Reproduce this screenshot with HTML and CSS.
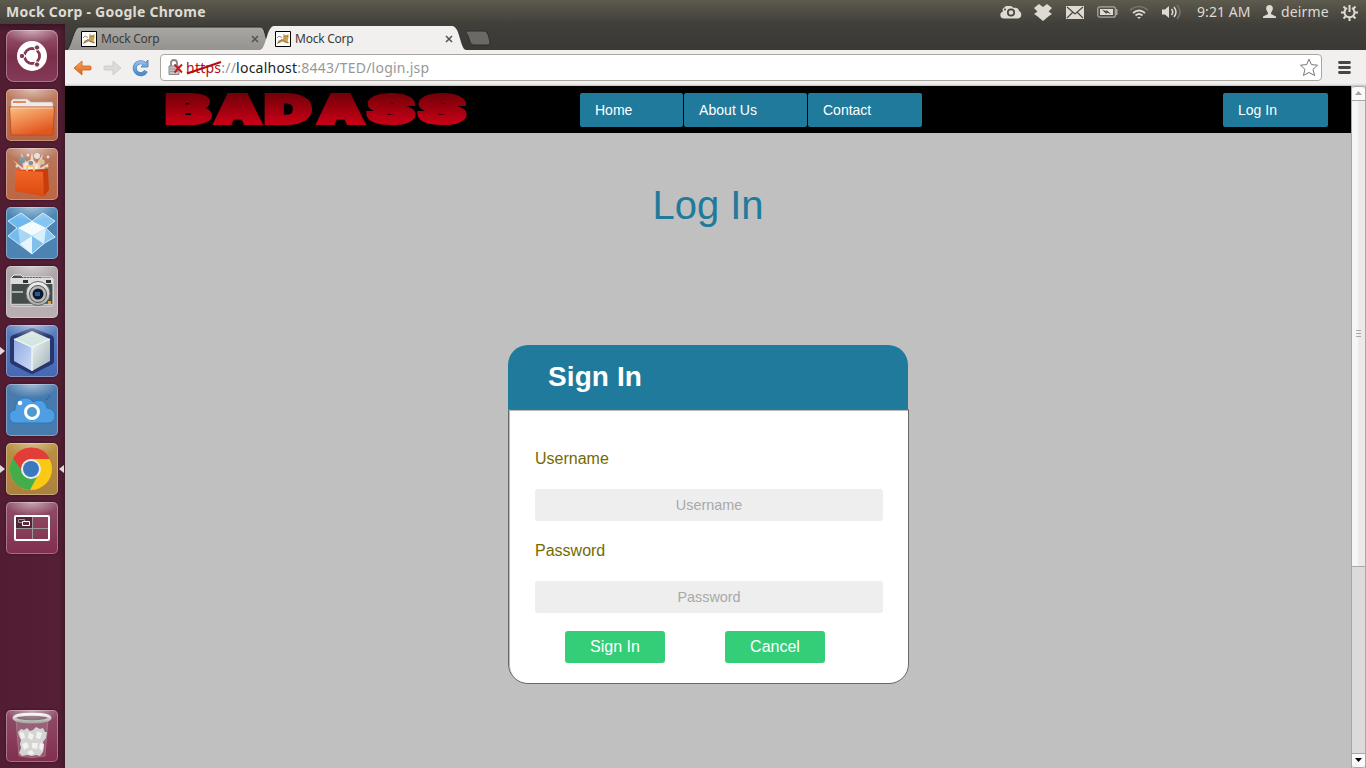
FILE: index.html
```html
<!DOCTYPE html>
<html lang="en">
<head>
<meta charset="utf-8">
<title>Mock Corp</title>
<link rel="stylesheet" href="styles.css">
</head>
<body>
<svg class="defs" width="0" height="0">
  <defs>
    <linearGradient id="orange" x2=".5" y2="1"><stop stop-color="#fbc083"/><stop offset="1" stop-color="#e2561f"/></linearGradient>
    <linearGradient id="arrow" x2="0" y2="1"><stop stop-color="#f9a65e"/><stop offset="1" stop-color="#dc6215"/></linearGradient>
    <linearGradient id="reload" x2="0" y2="1"><stop stop-color="#92bce6"/><stop offset="1" stop-color="#4c8bca"/></linearGradient>
    <linearGradient id="tabOff" x2="0" y2="1"><stop stop-color="#a9a7a2"/><stop offset="1" stop-color="#949390"/></linearGradient>
    <linearGradient id="red" gradientUnits="userSpaceOnUse" x1="0" y1="-29" x2="0" y2="3"><stop stop-color="#740008"/><stop offset="1" stop-color="#cf0018"/></linearGradient>
    <linearGradient id="metal" x2="0" y2="1"><stop stop-color="#f4f4f2"/><stop offset="1" stop-color="#a7a9a6"/></linearGradient>
    <linearGradient id="bag" x2="0" y2="1"><stop stop-color="#f2662a"/><stop offset="1" stop-color="#dd4a10"/></linearGradient>
    <linearGradient id="cubeL" x2="1" y2="1"><stop stop-color="#8fa9e4"/><stop offset="1" stop-color="#cfdcf5"/></linearGradient>
    <linearGradient id="cubeR" x2="1" y2="1"><stop stop-color="#eef3f4"/><stop offset="1" stop-color="#9fb2b8"/></linearGradient>
    <symbol id="cat" viewBox="0 0 16 16"><path fill="#fff" stroke="#000" d="M.5.5h15v15H.5z"/><path fill="#cf9e48" d="M8 8l.5-5.500 1.500 1.500h2L13.500 3v4l-1 2.500 2 3-3-1-4-1-3 1.500-2.500.5 1.500-3z"/><path d="M2 7l2-2 3 1.500M2.500 12.500l4.500-4 2 2 4 1.500M9.500 5.500h1m1.500 0h1" fill="none" stroke="#665d50" stroke-width=".7"/></symbol>
  </defs>
</svg>
<div class="desktop">
  <header class="panel">
    <span class="panel-title">Mock Corp - Google Chrome</span>
    <div class="indicators">
      <svg class="i-cloud" width="22" height="16" viewBox="0 0 22 16"><path fill="#dfdbd2" d="M4 14.500C-1 14.500-.5 8 3 7.500L2.500 5 6 2h5l3 2c3-1 5 1 5 3 3 1 3.500 7-1 7.500z"/><circle cx="11" cy="8.500" r="3.200" fill="#dfdbd2" stroke="#49473f" stroke-width="1.700"/><circle cx="5" cy="5.500" r="1" fill="#49473f"/></svg>
      <svg class="i-drop" width="18" height="17" viewBox="0 0 18 17"><path fill="#dfdbd2" d="M5 0l4 3 4-3 5 4-3.500 3.500L18 10l-3 2-6 5-6-5-3-2 3.500-2.500L0 4z"/></svg>
      <svg class="i-mail" width="18" height="13" viewBox="0 0 18 13"><path fill="#dfdbd2" d="M0 0h18v13H0z"/><path d="M1 1l8 7 8-7M1 12l5.500-5.500M17 12l-5.500-5.500" fill="none" stroke="#49473f" stroke-width="1.200"/></svg>
      <svg class="i-batt" width="21" height="12" viewBox="0 0 21 12"><rect x=".8" y=".8" width="17.500" height="10.400" rx="2" fill="none" stroke="#aaa79f" stroke-width="1.300"/><path fill="#aaa79f" d="M19 3h1.500v6H19z"/><path fill="#dfdbd2" d="M3 3h13v6H3z"/><path d="M5 3.500l4.500 1.700V4L14 8 9.500 6.500v1.700z" fill="#45433c"/></svg>
      <svg class="i-wifi" width="20" height="15" viewBox="0 0 20 15" fill="none" stroke-width="1.700"><path stroke="#77746b" d="M1 5q9-7 18 0"/><path stroke="#dfdbd2" d="M4 8q6-5 12 0M6.500 10.500q3.500-3 7 0"/><path fill="#dfdbd2" d="M8 12h4l-2 2z"/></svg>
      <svg class="i-vol" width="20" height="16" viewBox="0 0 20 16"><path fill="#dfdbd2" d="M0 5.500h3l4-3.500v12l-4-3.500H0z"/><g fill="none" stroke="#dfdbd2" stroke-width="1.500"><path d="M9.500 5q2.500 3 0 6M12 3q4 5 0 10"/><path stroke="#77746b" d="M15 1q6 7 0 14"/></g></svg>
      <span class="clock">9:21 AM</span>
      <svg class="i-user" width="13" height="14" viewBox="0 0 13 14"><path fill="#dfdbd2" d="M6.500 0c3 0 4 3 3 5L8 8v1l5 2.500V13H0v-1.500L5 9V8L3.500 5c-1-2 0-5 3-5z"/></svg>
      <span class="user">deirme</span>
      <svg class="i-gear" width="17" height="17" viewBox="0 0 17 17" fill="none" stroke="#dfdbd2"><path stroke-width="2" d="M6 4a5 5 0 1 0 5 0"/><path stroke-width="2" d="M8.500 1v7M2.500 2.500L5 5M14.500 2.500L12 5M0 8.500h3M14 8.500h3M2.500 14.500L5 12M14.500 14.500L12 12M8.500 14v3"/></svg>
    </div>
  </header>
  <div class="workspace">
    <nav class="launcher">
      <div class="tile ubuntu"><svg viewBox="0 0 52 52"><circle cx="26" cy="26" r="15" fill="#fff"/><circle cx="26" cy="26" r="7.500" fill="none" stroke="#823c57" stroke-width="3"/><path d="M26 26H14M26 26l6-10M26 26l6 10" stroke="#fff" stroke-width="1.500"/><circle cx="26" cy="26" r="6" fill="#fff"/><g fill="#823c57" stroke="#fff"><circle cx="16" cy="26" r="2.700"/><circle cx="31" cy="17.500" r="2.700"/><circle cx="31" cy="34.500" r="2.700"/></g></svg></div>
      <div class="tile files"><svg viewBox="0 0 52 52"><path d="M5 22V12l2-2h14l4 3h21l1 2v8z" fill="#ececec" stroke="#b8aaa1" stroke-width=".7"/><path stroke="#e98655" stroke-width="2" d="M7 13h13"/><path d="M3.500 18h45L47 46H5z" fill="url(#orange)" stroke="#bd4d23"/><path d="M5 19h42" stroke="#ffd3aa"/></svg></div>
      <div class="tile software"><svg viewBox="0 0 52 52"><path d="M17 24L7 12l10 8-2-15 8 13 3-14 3 14 8-12-3 14 9-5-9 11z" fill="#f7e4d8" opacity=".8"/><circle cx="25" cy="19" r="7" fill="#fff" opacity=".6"/><g fill="#dedad6"><circle cx="16" cy="12" r="3.200" fill="#7098a8"/><circle cx="31" cy="8" r="3"/><circle cx="25" cy="15" r="2.300" fill="#7794a0"/><circle cx="36" cy="14" r="2.800" fill="#dbc295"/><circle cx="42" cy="9" r="1.500"/><circle cx="22" cy="7" r="1.500"/><circle cx="11" cy="18" r="1.500"/><circle cx="41" cy="18" r="1.500"/></g><path d="M9 22l33-1 1 21-5 6-28-5z" fill="#c93d0c"/><path d="M9 22l28 2 1 24-29-5z" fill="url(#bag)"/><path d="M21 23v-4q0-1 1-1h5q1 0 1 1v4" fill="none" stroke="#ffc16e" stroke-width="1.800"/></svg></div>
      <div class="tile dropbox"><svg viewBox="0 0 52 52"><path fill="#8dc6f2" d="M2 14l13-8 11 8 11-8 12 8-9 7 9 9-12 7-11 10-12-9L2 29l9-8z"/><path fill="#6db8ee" d="M2 14l13-8 11 8-14 8z"/><path fill="#87c5f1" d="M49 14L37 6l-11 8 14 8z"/><path fill="#f4fbff" d="M12 21l14-7 14 7-14 8z"/><path fill="#75bbee" d="M12 22L2 29l12 8 12-8z"/><path fill="#8bcaf3" d="M40 22l10 8-13 7-11-8z"/><path fill="#a9d6f5" d="M12 21l14 8v18l-12-10z"/><path fill="#d9effb" d="M40 21l-14 8v18l12-10z"/><path fill="#e7f5fd" d="M26 29l-12 8 12 10z"/><path fill="#82c0ec" d="M26 29l12 8-12 10z"/><path d="M2 14l13-8 11 8 11-8 12 8-9 7 9 9-12 7-11 10-12-9L2 29l9-8z" fill="none" stroke="#e4f4fd" stroke-width=".8"/></svg></div>
      <div class="tile camera"><svg viewBox="0 0 52 52"><path d="M5 12l3-3h7l2 2h28l2 2v25q0 2-2 2H7q-2 0-2-2z" fill="#454a4a" stroke="#eee" stroke-width="1"/><path d="M5 12h42v6H5z" fill="#ddd"/><path d="M18 11.500h17" stroke="#555" stroke-dasharray="2 1"/><path d="M17 14h5v3h-5zM40 14h5v3h-5z" fill="#333"/><path d="M6 26h11M6 38.500h40" stroke="#ccc" stroke-width="1.500"/><circle cx="32" cy="27.500" r="12" fill="url(#metal)" stroke="#666"/><circle cx="32" cy="28" r="8.500" fill="#b8baba" stroke="#555"/><circle cx="32" cy="28" r="5.500" fill="#101927"/><path d="M29 26h5v4h-5z" fill="#285a9a"/><path fill="#e6a12b" d="M42 35h3v3h-3z"/></svg></div>
      <div class="tile cube running"><svg viewBox="0 0 52 52"><path d="M26 7l18 7v22L26 45 8 36V14z" fill="#27366f" stroke="#27366f" stroke-width="8" stroke-linejoin="round"/><path fill="#d4e6df" d="M26 6l18 8-18 8L8 14z"/><path fill="url(#cubeL)" d="M8 14l18 8v24L8 36z"/><path fill="url(#cubeR)" d="M44 14l-18 8v24l18-10z"/><path d="M8 14l18 8 18-8M26 22v24" stroke="#f4f8fb" fill="none" stroke-width="1.300"/></svg></div>
      <div class="tile cloud"><svg viewBox="0 0 52 52"><path d="M8 39C1 37 2 26 9 26c0-12 13-16 18-8 7-4 13-1 14 6 11 1 10 15 1 15H10z" fill="#4d9ee2" stroke="#287abc"/><circle cx="26" cy="28" r="6.500" fill="#5198cf" stroke="#fff" stroke-width="3"/><circle cx="14" cy="19" r="2.300" fill="#fff"/><path d="M40 15h2m1-2h1m-2-1h1" stroke="#2470ad" stroke-width="2"/></svg></div>
      <div class="tile chrome running focused"><svg viewBox="0 0 52 52"><circle cx="25" cy="26" r="21" fill="#fac913"/><path d="M25 26L7 15a21 21 0 0 0 17 32l9-17z" fill="#42ad4b"/><path d="M25 16h19a21 21 0 0 0-37-1l9 13z" fill="#e23d36"/><circle cx="25" cy="26" r="10" fill="#eee"/><circle cx="25" cy="26" r="8" fill="#3a78c0"/></svg></div>
      <div class="tile spaces"><svg viewBox="0 0 52 52"><path d="M9 14h17v12H9z" fill="#4e2437"/><path d="M26.500 14v24M9 26.500h34" stroke="#999" stroke-width="1"/><rect x="9" y="14" width="34" height="24" rx="1" fill="none" stroke="#fff" stroke-width="2"/><path d="M12.500 17.500h6v3h-6z" fill="none" stroke="#999"/><path d="M16.500 19.500h7v4h-7z" fill="#5d2b42" stroke="#fff"/></svg></div>
      <div class="tile trash"><svg viewBox="0 0 52 52"><path d="M10 9h32l-3 37q-13 3-26 0z" fill="#bba7b0" opacity=".3" stroke="#eee"/><path d="M12 22l3-3 3 1 3-2 3 3 3-1 3-3 4 2 3-1 2 4 2 0-1 6-3 4 1 5-1 5-3 4-4-1-4 1-5-1-5 1-3-3 2-5-1-4 1-4-2-4z" fill="#d4d5d2"/><path d="M14 22l4 1 1 5-4 1zM23 22l5 3-2 5-4-2zM31 21l5 2-2 6-4-1zM16 34l5-2 2 5-5 3zM26 33l6 0-1 6-5-1zM34 33l4 1-2 7-3-3zM21 42l5-2 2 4-4 1z" fill="#f1f1ef"/><ellipse cx="26" cy="8" rx="18" ry="3.800" fill="#74575f" stroke="url(#metal)" stroke-width="3"/></svg></div>
    </nav>
    <section class="browser">
      <div class="tabs">
        <div class="tab"><svg class="tab-shape" width="206" height="24" viewBox="0 0 206 24"><path d="M2 24c4-3 7-23 12-23h182c5 0 5 20 10 23" fill="url(#tabOff)" stroke="#292825"/></svg><svg class="favicon"><use href="#cat"/></svg><span>Mock Corp</span><svg class="close" viewBox="0 0 8 8"><path d="M1 1l6 6M7 1L1 7"/></svg></div>
        <div class="tab active"><svg class="tab-shape" width="212" height="24" viewBox="0 0 212 24"><path d="M1 24c6-1 7-24 14-24h178c8 0 8 23 14 24" fill="#f1f0ef"/></svg><svg class="favicon"><use href="#cat"/></svg><span>Mock Corp</span><svg class="close" viewBox="0 0 8 8"><path d="M1 1l6 6M7 1L1 7"/></svg></div>
        <svg class="newtab" width="26" height="16" viewBox="0 0 26 16"><path d="M1 1h18c3 0 4 3 5 7s2 7-1 7H9c-4 0-4-4-5.500-8S0 2 1 1z" fill="#6b6964" stroke="#2d2c29"/></svg>
      </div>
      <div class="toolbar">
        <svg class="back" width="20" height="16" viewBox="0 0 20 16"><path d="M1 8l8-7v5h8q1 0 1 1v2q0 1-1 1H9v5z" fill="url(#arrow)" stroke="#cb601d" stroke-width=".8" stroke-linejoin="round"/></svg>
        <svg class="forward" width="20" height="16" viewBox="0 0 20 16"><path d="M19 8l-8-7v5H3q-1 0-1 1v2q0 1 1 1h8v5z" fill="#dddbd8" stroke="#c9c7c3" stroke-width=".8" stroke-linejoin="round"/></svg>
        <svg class="reload" width="18" height="18" viewBox="0 0 18 18"><path d="M14 12a6 6 0 1 1-1-7" fill="none" stroke="#477fb9" stroke-width="4"/><path d="M9 8h7V1z" fill="#76a9dc" stroke="#477fb9" stroke-width=".8"/><path d="M14 12a6 6 0 1 1-1-7" fill="none" stroke="url(#reload)" stroke-width="3"/></svg>
        <div class="omnibox">
          <svg class="lock" width="16" height="17" viewBox="0 0 16 17"><path d="M3 8V4q0-3 3-3t3 3v4" fill="none" stroke="#888" stroke-width="1.800"/><path d="M1 7h10v8.500H1z" fill="#c4c4c4" stroke="#888"/><path d="M2 10h8M2 12.500h8" stroke="#999"/><path d="M6.500 5.500l7.500 8M14 5.500l-7.500 8" stroke="#d81413" stroke-width="1.900"/></svg>
          <span class="url"><span class="scheme">https<svg class="strike" width="38" height="15" viewBox="0 0 38 15"><path d="M1 13.500L35 2" stroke="#b20d12" stroke-width="2.200"/></svg></span>://<b>localhost</b>:8443/TED/login.jsp</span>
          <svg class="star" width="20" height="19" viewBox="0 0 20 19"><path d="M10 1.200l2.400 5.400 6.100.6-4.500 4.200 1.600 6.100-5.600-3-5.600 3L6 11.400 1.500 7.200l6.100-.6z" fill="#fff" stroke="#777" stroke-linejoin="round"/></svg>
        </div>
        <svg class="menu" width="13" height="13" viewBox="0 0 13 13"><path d="M1.500 1.500h10M1.500 6.500h10M1.500 11.500h10" stroke="#464646" stroke-width="2.800" stroke-linecap="round"/></svg>
      </div>
      <div class="viewport">
        <main class="page">
          <header class="site-header">
            <svg class="logo" width="302" height="42" viewBox="0 -6 302 42">
              <g transform="translate(0 32)" fill="url(#red)" stroke="url(#red)" stroke-width="4" class="logo-text">
                <text x="1" textLength="44" lengthAdjust="spacingAndGlyphs">B</text><text x="50" textLength="45" lengthAdjust="spacingAndGlyphs">A</text><text x="100" textLength="46" lengthAdjust="spacingAndGlyphs">D</text><text x="153" textLength="45" lengthAdjust="spacingAndGlyphs">A</text><text x="203" textLength="46" lengthAdjust="spacingAndGlyphs">S</text><text x="254" textLength="46" lengthAdjust="spacingAndGlyphs">S</text>
              </g>
            </svg>
            <nav class="site-nav"><a class="home">Home</a><a class="about">About Us</a><a class="contact">Contact</a></nav>
            <a class="login">Log In</a>
          </header>
          <h1>Log In</h1>
          <div class="card">
            <h2>Sign In</h2>
            <form>
              <label>Username</label><input placeholder="Username">
              <label>Password</label><input type="password" placeholder="Password">
              <div class="actions"><button type="button">Sign In</button><button type="button">Cancel</button></div>
            </form>
          </div>
        </main>
        <div class="scrollbar">
          <div class="sb-button"><svg width="7" height="5" viewBox="0 0 7 5"><path d="M0 4l3.500-4L7 4z" fill="#a5a3a0"/></svg></div>
          <div class="thumb"><i></i><i></i><i></i></div>
          <div class="trough"></div>
          <div class="sb-button bottom"><svg width="7" height="5" viewBox="0 0 7 5"><path d="M0 0h7L3.500 4z" fill="#000"/></svg></div>
        </div>
      </div>
    </section>
  </div>
</div>
</body>
</html>
```
FILE: styles.css
```css
* { box-sizing: border-box; }
body { margin: 0; overflow: hidden; font-family: "Liberation Sans", Arial, sans-serif; }
svg { display: block; flex: none; }
.defs { position: absolute; }
.desktop { width: 1366px; height: 768px; display: flex; flex-direction: column; background: #3c3b37; }

.panel { height: 24px; flex: none; display: flex; align-items: center; justify-content: space-between; padding: 0 8px 0 6px; background: linear-gradient(#5d5a4e, #413f3a); color: #dfdbd2; font-family: "Noto Sans", sans-serif; font-size: 14px; white-space: nowrap; }
.panel-title { margin-top: -2px; font-weight: 700; letter-spacing: .25px; }
.indicators { display: flex; align-items: center; }
.i-cloud { margin-left: 1px; }
.i-drop { margin-left: 12px; }
.i-mail { margin-left: 14px; }
.i-batt { margin-left: 13px; }
.i-wifi { margin-left: 11px; }
.i-vol { margin-left: 13px; }
.clock { margin: -2px 0 0 15px; width: 54px; letter-spacing: .08px; }
.i-user { margin-left: 12px; }
.user { margin: -2px 0 0 5px; width: 49px; letter-spacing: .15px; }
.i-gear { margin-left: 11px; }

.workspace { flex: 1; min-height: 0; display: flex; }
.launcher { width: 65px; flex: none; display: flex; flex-direction: column; gap: 7px; padding: 6px 7px 6px 6px; background: linear-gradient(#3d1424, transparent 8px), linear-gradient(90deg, #521d33, #551f35 90%, #43182a); }
.tile { position: relative; width: 52px; height: 52px; flex: none; border-radius: 5px; box-shadow: inset 0 0 0 1px rgba(255,255,255,.3), 0 0 3px rgba(0,0,0,.4); }
.tile::after { content: ""; position: absolute; inset: 0; border-radius: 5px; background: radial-gradient(ellipse 28px 14px at 50% 0, rgba(255,255,255,.5), transparent); }
.tile svg { width: 52px; height: 52px; }
.ubuntu { background: linear-gradient(#9a5870, #7a2e4a 50%, #843b57); border-radius: 8px; }
.files { background: linear-gradient(#bd8066, #b66342); }
.software { background: linear-gradient(#b77a60, #bd6542); }
.dropbox { background: linear-gradient(#4a86b6, #4d83b3); }
.camera { background: linear-gradient(#aaa3a6, #b8b0b3); }
.cube { background: linear-gradient(#5a7fbe, #4668b2); }
.cloud { background: linear-gradient(#4879ac, #477caf); }
.chrome { background: linear-gradient(#b99042, #ac813e); }
.spaces { background: linear-gradient(#914e69, #812f4e); }
.trash { margin-top: auto; background: linear-gradient(#914e69, #812f4e); }
.running::before { content: ""; position: absolute; left: -6px; top: 22px; border: solid transparent; border-width: 4px 0 4px 5px; border-left-color: #dedbdc; }
.focused::after { left: auto; right: -6px; top: 22px; bottom: auto; border: solid transparent; border-width: 4px 5px 4px 0; border-right-color: #dedbdc; border-radius: 0; background: none; }
.focused svg { border-radius: 5px; background: radial-gradient(ellipse 28px 14px at 50% 0, rgba(255,255,255,.4), transparent); }

.browser { flex: 1; min-width: 0; display: flex; flex-direction: column; }
.tabs { height: 26px; flex: none; display: flex; align-items: flex-end; background: linear-gradient(#413f3a, #3a3935); }
.tab { position: relative; width: 206px; height: 24px; display: flex; align-items: center; padding: 1px 12px 0 16px; font: 12px "Noto Sans", sans-serif; color: #3b3a38; }
.tab span { position: relative; margin: -1px 0 0 4px; letter-spacing: -.25px; }
.tab + .tab { margin-left: -12px; }
.tab-shape { position: absolute; left: 0; top: 0; }
.favicon { position: relative; width: 16px; height: 16px; }
.close { position: relative; width: 8px; height: 8px; margin-left: auto; fill: none; stroke: #52514e; stroke-width: 1.5; }
.newtab { margin: 0 0 4px 0; }
.toolbar { height: 36px; flex: none; display: flex; align-items: center; padding: 0 15px 1px 8px; background: linear-gradient(#f1f0ef 33px, #e0dfdd 35px, #b5b3b0); }
.forward { margin-left: 9px; }
.reload { margin-left: 10px; }
.omnibox { height: 27px; flex: 1; display: flex; align-items: center; margin-left: 10px; padding: 0 2px 0 7px; border: 1px solid #aaa5a0; border-radius: 4px; background: #fff; }
.url { margin: -1px 0 0 2px; font: 14px "Noto Sans", sans-serif; letter-spacing: .23px; color: #989898; }
.url b { color: #222; font-weight: 400; }
.scheme { position: relative; color: #b20d12; }
.strike { position: absolute; left: 0; top: 2px; }
.star { margin-left: auto; }
.menu { margin-left: 16px; }

.viewport { flex: 1; min-height: 0; display: flex; }
.page { width: 1286px; background: #c0c0c0; }
.site-header { height: 47px; display: flex; align-items: flex-start; padding: 7px 23px 0 100px; background: #000; }
.logo { margin-top: -8px; overflow: visible; }
.logo-text { font: 900 38px Inter, sans-serif; stroke-linejoin: miter; stroke-miterlimit: 2; }
.site-nav { display: flex; gap: 1px; margin-left: 113px; }
.site-header a { height: 34px; padding-left: 15px; border-radius: 2px; background: #1f7a9b; color: #fff; font-size: 14px; line-height: 34px; }
.home { width: 103px; }
.site-header .about { width: 123px; letter-spacing: .05px; }
.contact { width: 114px; }
.login { width: 105px; margin-left: auto; }
h1 { margin: 49px 0 0; height: 46px; color: #1f7a9b; font-size: 40px; font-weight: 400; line-height: 46px; text-align: center; }
.card { width: 401px; margin: 117px 0 0 443px; }
h2 { width: 400px; height: 64px; margin: 0; padding-left: 40px; border-radius: 20px 20px 0 0; background: #1f7a9b; color: #fff; font-size: 28px; line-height: 64px; letter-spacing: .1px; }
form { height: 275px; display: flex; flex-direction: column; padding: 39px 25px 0 26px; border: 1px solid #686868; border-radius: 0 0 20px 20px; background: #fff; box-shadow: inset 1px 1px #b9b9b9; }
label { height: 20px; color: #736a00; font-size: 16px; line-height: 20px; }
input { width: 348px; height: 32px; margin: 20px 0; padding: 0; border: 0; border-radius: 3px; background: #eee; font: 14.4px "Liberation Sans", Arial, sans-serif; text-align: center; }
input::placeholder { color: #a9a9a9; }
.actions { display: flex; gap: 60px; margin: -2px 0 0 30px; }
button { width: 100px; height: 32px; padding: 0; border: 0; border-radius: 3px; background: #34cd78; color: #fff; font: 16px "Liberation Sans", Arial, sans-serif; }

.scrollbar { width: 15px; display: flex; flex-direction: column; border: solid #aaa8a6; border-width: 0 1px; background: #dcdbda; }
.sb-button { height: 15px; display: flex; align-items: center; justify-content: center; border: solid #aaa8a6; border-width: 1px 0; border-radius: 3px 3px 0 0; background: #fafafa; }
.sb-button.bottom { border-radius: 0 0 3px 3px; }
.thumb { height: 466px; display: flex; flex-direction: column; align-items: center; justify-content: center; gap: 2px; border-bottom: 1px solid #aaa8a6; background: linear-gradient(90deg, #f7f6f5 50%, #ebeae9 50%); }
.thumb i { width: 5px; height: 1px; background: #aaa; }
.trough { flex: 1; }
```
